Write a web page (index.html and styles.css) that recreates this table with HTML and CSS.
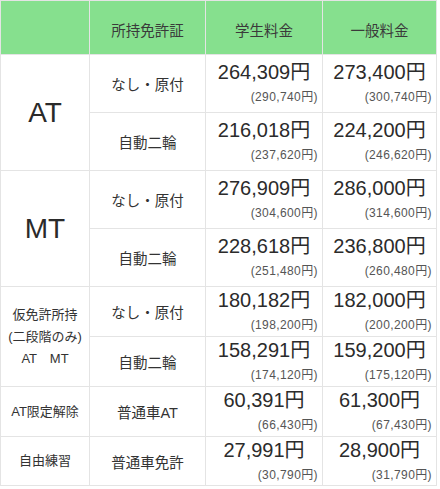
FILE: index.html
```html
<!DOCTYPE html>
<html lang="ja">
<head>
<meta charset="utf-8">
<link rel="stylesheet" href="styles.css">
</head>
<body>
<div class="price-table">
  <div class="cell head"></div>
  <div class="cell head">所持免許証</div>
  <div class="cell head">学生料金</div>
  <div class="cell head">一般料金</div>

  <div class="cell kind big-kind span2">AT</div>
  <div class="cell lic">なし・原付</div>
  <div class="cell price"><span class="main">264,309円</span><span class="sub">(290,740円)</span></div>
  <div class="cell price"><span class="main">273,400円</span><span class="sub">(300,740円)</span></div>
  <div class="cell lic">自動二輪</div>
  <div class="cell price"><span class="main">216,018円</span><span class="sub">(237,620円)</span></div>
  <div class="cell price"><span class="main">224,200円</span><span class="sub">(246,620円)</span></div>

  <div class="cell kind big-kind span2">MT</div>
  <div class="cell lic">なし・原付</div>
  <div class="cell price"><span class="main">276,909円</span><span class="sub">(304,600円)</span></div>
  <div class="cell price"><span class="main">286,000円</span><span class="sub">(314,600円)</span></div>
  <div class="cell lic">自動二輪</div>
  <div class="cell price"><span class="main">228,618円</span><span class="sub">(251,480円)</span></div>
  <div class="cell price"><span class="main">236,800円</span><span class="sub">(260,480円)</span></div>

  <div class="cell kind small-kind span2">仮免許所持<br>(二段階のみ)<br>AT　MT</div>
  <div class="cell lic">なし・原付</div>
  <div class="cell price"><span class="main">180,182円</span><span class="sub">(198,200円)</span></div>
  <div class="cell price"><span class="main">182,000円</span><span class="sub">(200,200円)</span></div>
  <div class="cell lic">自動二輪</div>
  <div class="cell price"><span class="main">158,291円</span><span class="sub">(174,120円)</span></div>
  <div class="cell price"><span class="main">159,200円</span><span class="sub">(175,120円)</span></div>

  <div class="cell kind small-kind">AT限定解除</div>
  <div class="cell lic">普通車AT</div>
  <div class="cell price"><span class="main">60,391円</span><span class="sub">(66,430円)</span></div>
  <div class="cell price"><span class="main">61,300円</span><span class="sub">(67,430円)</span></div>

  <div class="cell kind small-kind">自由練習</div>
  <div class="cell lic">普通車免許</div>
  <div class="cell price"><span class="main">27,991円</span><span class="sub">(30,790円)</span></div>
  <div class="cell price"><span class="main">28,900円</span><span class="sub">(31,790円)</span></div>
</div>
</body>
</html>
```

FILE: styles.css
```css
html, body {
  margin: 0;
  padding: 0;
  background: #ffffff;
}

body {
  font-family: "Liberation Sans", "Noto Sans CJK JP", sans-serif;
  color: #333333;
}

.price-table {
  display: grid;
  grid-template-columns: 88px 115px 116px 113px;
  grid-template-rows: 53px 57px 57px 57px 57px 49px 49px 49px 48px;
  gap: 1px;
  padding: 1px;
  background: #e4e4e4;
  width: 435px;
}

.cell {
  background: #ffffff;
  display: flex;
  align-items: center;
  justify-content: center;
  text-align: center;
}

.head {
  background: #86e08e;
  font-size: 14.5px;
  color: #3a3a3a;
  padding-top: 4px;
}

.span2 {
  grid-row: span 2;
}

.big-kind {
  font-size: 28px;
  color: #2a2a2a;
}

.small-kind {
  font-size: 13px;
  line-height: 22px;
  color: #333333;
}

.lic {
  font-size: 14.5px;
  color: #333333;
}

.price {
  flex-direction: column;
  align-items: stretch;
  justify-content: center;
}

.main {
  font-size: 20px;
  line-height: 24px;
  color: #2b2b2b;
  text-align: center;
  margin-top: -2px;
}

.sub {
  font-size: 12px;
  line-height: 16px;
  margin-top: 5px;
  color: #555555;
  text-align: right;
  padding-right: 4px;
  letter-spacing: 0.4px;
}
```
